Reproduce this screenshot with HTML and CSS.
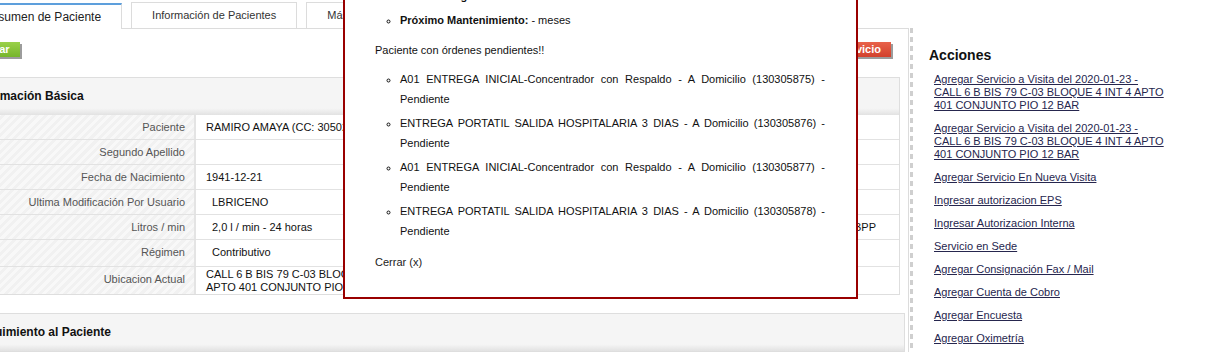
FILE: index.html
```html
<!DOCTYPE html>
<html lang="es">
<head>
  <meta charset="UTF-8">
  <title>Resumen de Paciente</title>
  <link rel="stylesheet" href="styles.css">
</head>
<body>
  <div class="page">
    <div class="main">
      <ul class="tabs">
        <li class="tab active">Resumen de Paciente</li>
        <li class="tab">Información de Pacientes</li>
        <li class="tab">Más Información</li>
      </ul>

      <div class="panel">
        <div class="actions-bar">
          <button class="btn btn-green">Actualizar</button>
          <button class="btn btn-red">Agregar Servicio</button>
        </div>

        <div class="section">
          <div class="section-head">Información Básica</div>
          <div class="info-row">
            <div class="info-label">Paciente</div>
            <div class="info-value">RAMIRO AMAYA (CC: 3050218)</div>
          </div>
          <div class="info-row">
            <div class="info-label">Segundo Apellido</div>
            <div class="info-value"></div>
          </div>
          <div class="info-row">
            <div class="info-label">Fecha de Nacimiento</div>
            <div class="info-value">1941-12-21</div>
          </div>
          <div class="info-row">
            <div class="info-label">Ultima Modificación Por Usuario</div>
            <div class="info-value indent">LBRICENO</div>
          </div>
          <div class="info-row">
            <div class="info-label">Litros / min</div>
            <div class="info-value indent split">
              <span>2,0 l / min - 24 horas</span>
              <span class="side-note">BPP</span>
            </div>
          </div>
          <div class="info-row tall">
            <div class="info-label">Régimen</div>
            <div class="info-value indent">Contributivo</div>
          </div>
          <div class="info-row tall">
            <div class="info-label">Ubicacion Actual</div>
            <div class="info-value multi">CALL 6 B BIS 79 C-03 BLOQUE 4 INT 4<br>APTO 401 CONJUNTO PIO 12 BAR</div>
          </div>
        </div>

        <div class="section wide">
          <div class="section-head">Seguimiento al Paciente</div>
        </div>
      </div>
    </div>

    <div class="sidebar">
      <h2>Acciones</h2>
      <ul class="links">
        <li><a href="#">Agregar Servicio a Visita del 2020-01-23 - CALL 6 B BIS 79 C-03 BLOQUE 4 INT 4 APTO 401 CONJUNTO PIO 12 BAR</a></li>
        <li><a href="#">Agregar Servicio a Visita del 2020-01-23 - CALL 6 B BIS 79 C-03 BLOQUE 4 INT 4 APTO 401 CONJUNTO PIO 12 BAR</a></li>
        <li><a href="#">Agregar Servicio En Nueva Visita</a></li>
        <li><a href="#">Ingresar autorizacion EPS</a></li>
        <li><a href="#">Ingresar Autorizacion Interna</a></li>
        <li><a href="#">Servicio en Sede</a></li>
        <li><a href="#">Agregar Consignación Fax / Mail</a></li>
        <li><a href="#">Agregar Cuenta de Cobro</a></li>
        <li><a href="#">Agregar Encuesta</a></li>
        <li><a href="#">Agregar Oximetría</a></li>
      </ul>
    </div>
  </div>

  <!-- aviso de mantenimiento / órdenes pendientes -->
  <div class="modal">
    <ul class="modal-list">
      <li><strong>Fecha de Ingreso:</strong> 2019-08-14</li>
      <li><strong>Próximo Mantenimiento:</strong> - meses</li>
    </ul>
    <p class="alert">Paciente con órdenes pendientes!!</p>
    <ul class="modal-list orders">
      <li>A01 ENTREGA INICIAL-Concentrador con Respaldo - A Domicilio (130305875) - Pendiente</li>
      <li>ENTREGA PORTATIL SALIDA HOSPITALARIA 3 DIAS - A Domicilio (130305876) - Pendiente</li>
      <li>A01 ENTREGA INICIAL-Concentrador con Respaldo - A Domicilio (130305877) - Pendiente</li>
      <li>ENTREGA PORTATIL SALIDA HOSPITALARIA 3 DIAS - A Domicilio (130305878) - Pendiente</li>
    </ul>
    <p class="close">Cerrar (x)</p>
  </div>
</body>
</html>
```

FILE: styles.css
```css
* {
  margin: 0;
  padding: 0;
  box-sizing: border-box;
}

html, body {
  overflow: hidden;
}

body {
  font-family: 'Liberation Sans', Arial, sans-serif;
  font-size: 11px;
  color: #111;
  background: white;
}

.page {
  display: flex;
  align-items: flex-start;
}

.main {
  width: 965px;
  flex-shrink: 0;
  margin-left: -56px;
}

/* pestañas */
.tabs {
  list-style: none;
  display: flex;
  align-items: flex-end;
  gap: 9px;
  height: 28px;
  padding-left: 18px;
}

.tab {
  height: 26px;
  line-height: 25px;
  padding: 0 20px;
  border: 1px solid #dcdcdc;
  border-bottom: none;
  color: #333;
  background: white;
  white-space: nowrap;
}

.tab.active {
  position: relative;
  z-index: 1;
  margin-bottom: -1px;
  border-top: 2px solid #5d9fdc;
  font-size: 12px;
  line-height: 24px;
  color: #222;
}

.panel {
  border-top: 1px solid #dcdcdc;
  border-right: 1px solid #dcdcdc;
  padding: 13px 8px 20px;
}

.actions-bar {
  display: flex;
  justify-content: space-between;
  margin-bottom: 20px;
  padding-right: 9px;
}

.btn {
  font-family: inherit;
  font-size: 11px;
  font-weight: bold;
  color: white;
  height: 15px;
  line-height: 15px;
  padding: 0 10px;
  border: none;
  box-shadow: 2px 2px 0 #9c9c9c;
}

.btn-green {
  margin-left: -5px;
  background: linear-gradient(#9ad14a, #76b52b);
}

.btn-red {
  background: linear-gradient(#e8624a, #d2412c);
}

/* secciones */
.section {
  border: 1px solid #dedede;
}

.section.wide {
  margin-top: 18px;
  margin-right: -5px;
}

.section-head {
  font-size: 12px;
  font-weight: bold;
  color: #111;
  line-height: 15px;
  padding: 11px 20px 11px;
  background: linear-gradient(#f5f5f5 0%, #f5f5f5 82%, #e2e2e2 100%);
}

.info-row {
  display: grid;
  grid-template-columns: 243px 1fr;
  height: 25px;
  border-bottom: 1px solid #e2e2e2;
}

.info-row.tall {
  height: 27px;
}

.info-row:last-child {
  border-bottom: none;
}

.info-label {
  text-align: right;
  color: #555;
  padding-right: 9px;
  line-height: 24px;
  border-right: 2px solid #e4e4e4;
  background: repeating-linear-gradient(-45deg, #f1f1f1 0, #f1f1f1 3px, #f8f8f8 3px, #f8f8f8 6px);
}

.info-value {
  padding-left: 10px;
  line-height: 24px;
  white-space: nowrap;
}

.info-value.indent {
  padding-left: 16px;
}

.info-value.split {
  display: flex;
  justify-content: space-between;
  padding-right: 23px;
}

.info-value.multi {
  line-height: 13px;
  padding-top: 1px;
}

/* barra lateral */
.sidebar {
  flex: 1;
  margin-top: 28px;
  margin-left: 1px;
  padding: 18px 0 0 19px;
  min-height: 340px;
  background-image: linear-gradient(#cfcfcf 5px, transparent 5px);
  background-size: 3px 9px;
  background-repeat: repeat-y;
}

.sidebar h2 {
  font-size: 14px;
  line-height: 18px;
  color: #111;
}

.links {
  list-style: none;
  margin-top: 9px;
  padding-left: 5px;
  width: 237px;
}

.links li {
  line-height: 13px;
  margin-bottom: 10px;
}

.links a {
  color: #26264e;
}

/* ventana emergente */
.modal {
  position: absolute;
  left: 343px;
  top: -40px;
  width: 515px;
  background: white;
  border: 2px solid #990000;
  padding: 24px 31px 25px 30px;
  color: #111;
}

.modal-list {
  list-style: circle;
  padding-left: 25px;
}

.modal-list li {
  line-height: 20px;
  margin-bottom: 4px;
  text-align: justify;
}

.alert {
  line-height: 20px;
  margin: 10px 0 9px;
}

.close {
  line-height: 20px;
  margin-top: 11px;
  color: #222;
}
```
